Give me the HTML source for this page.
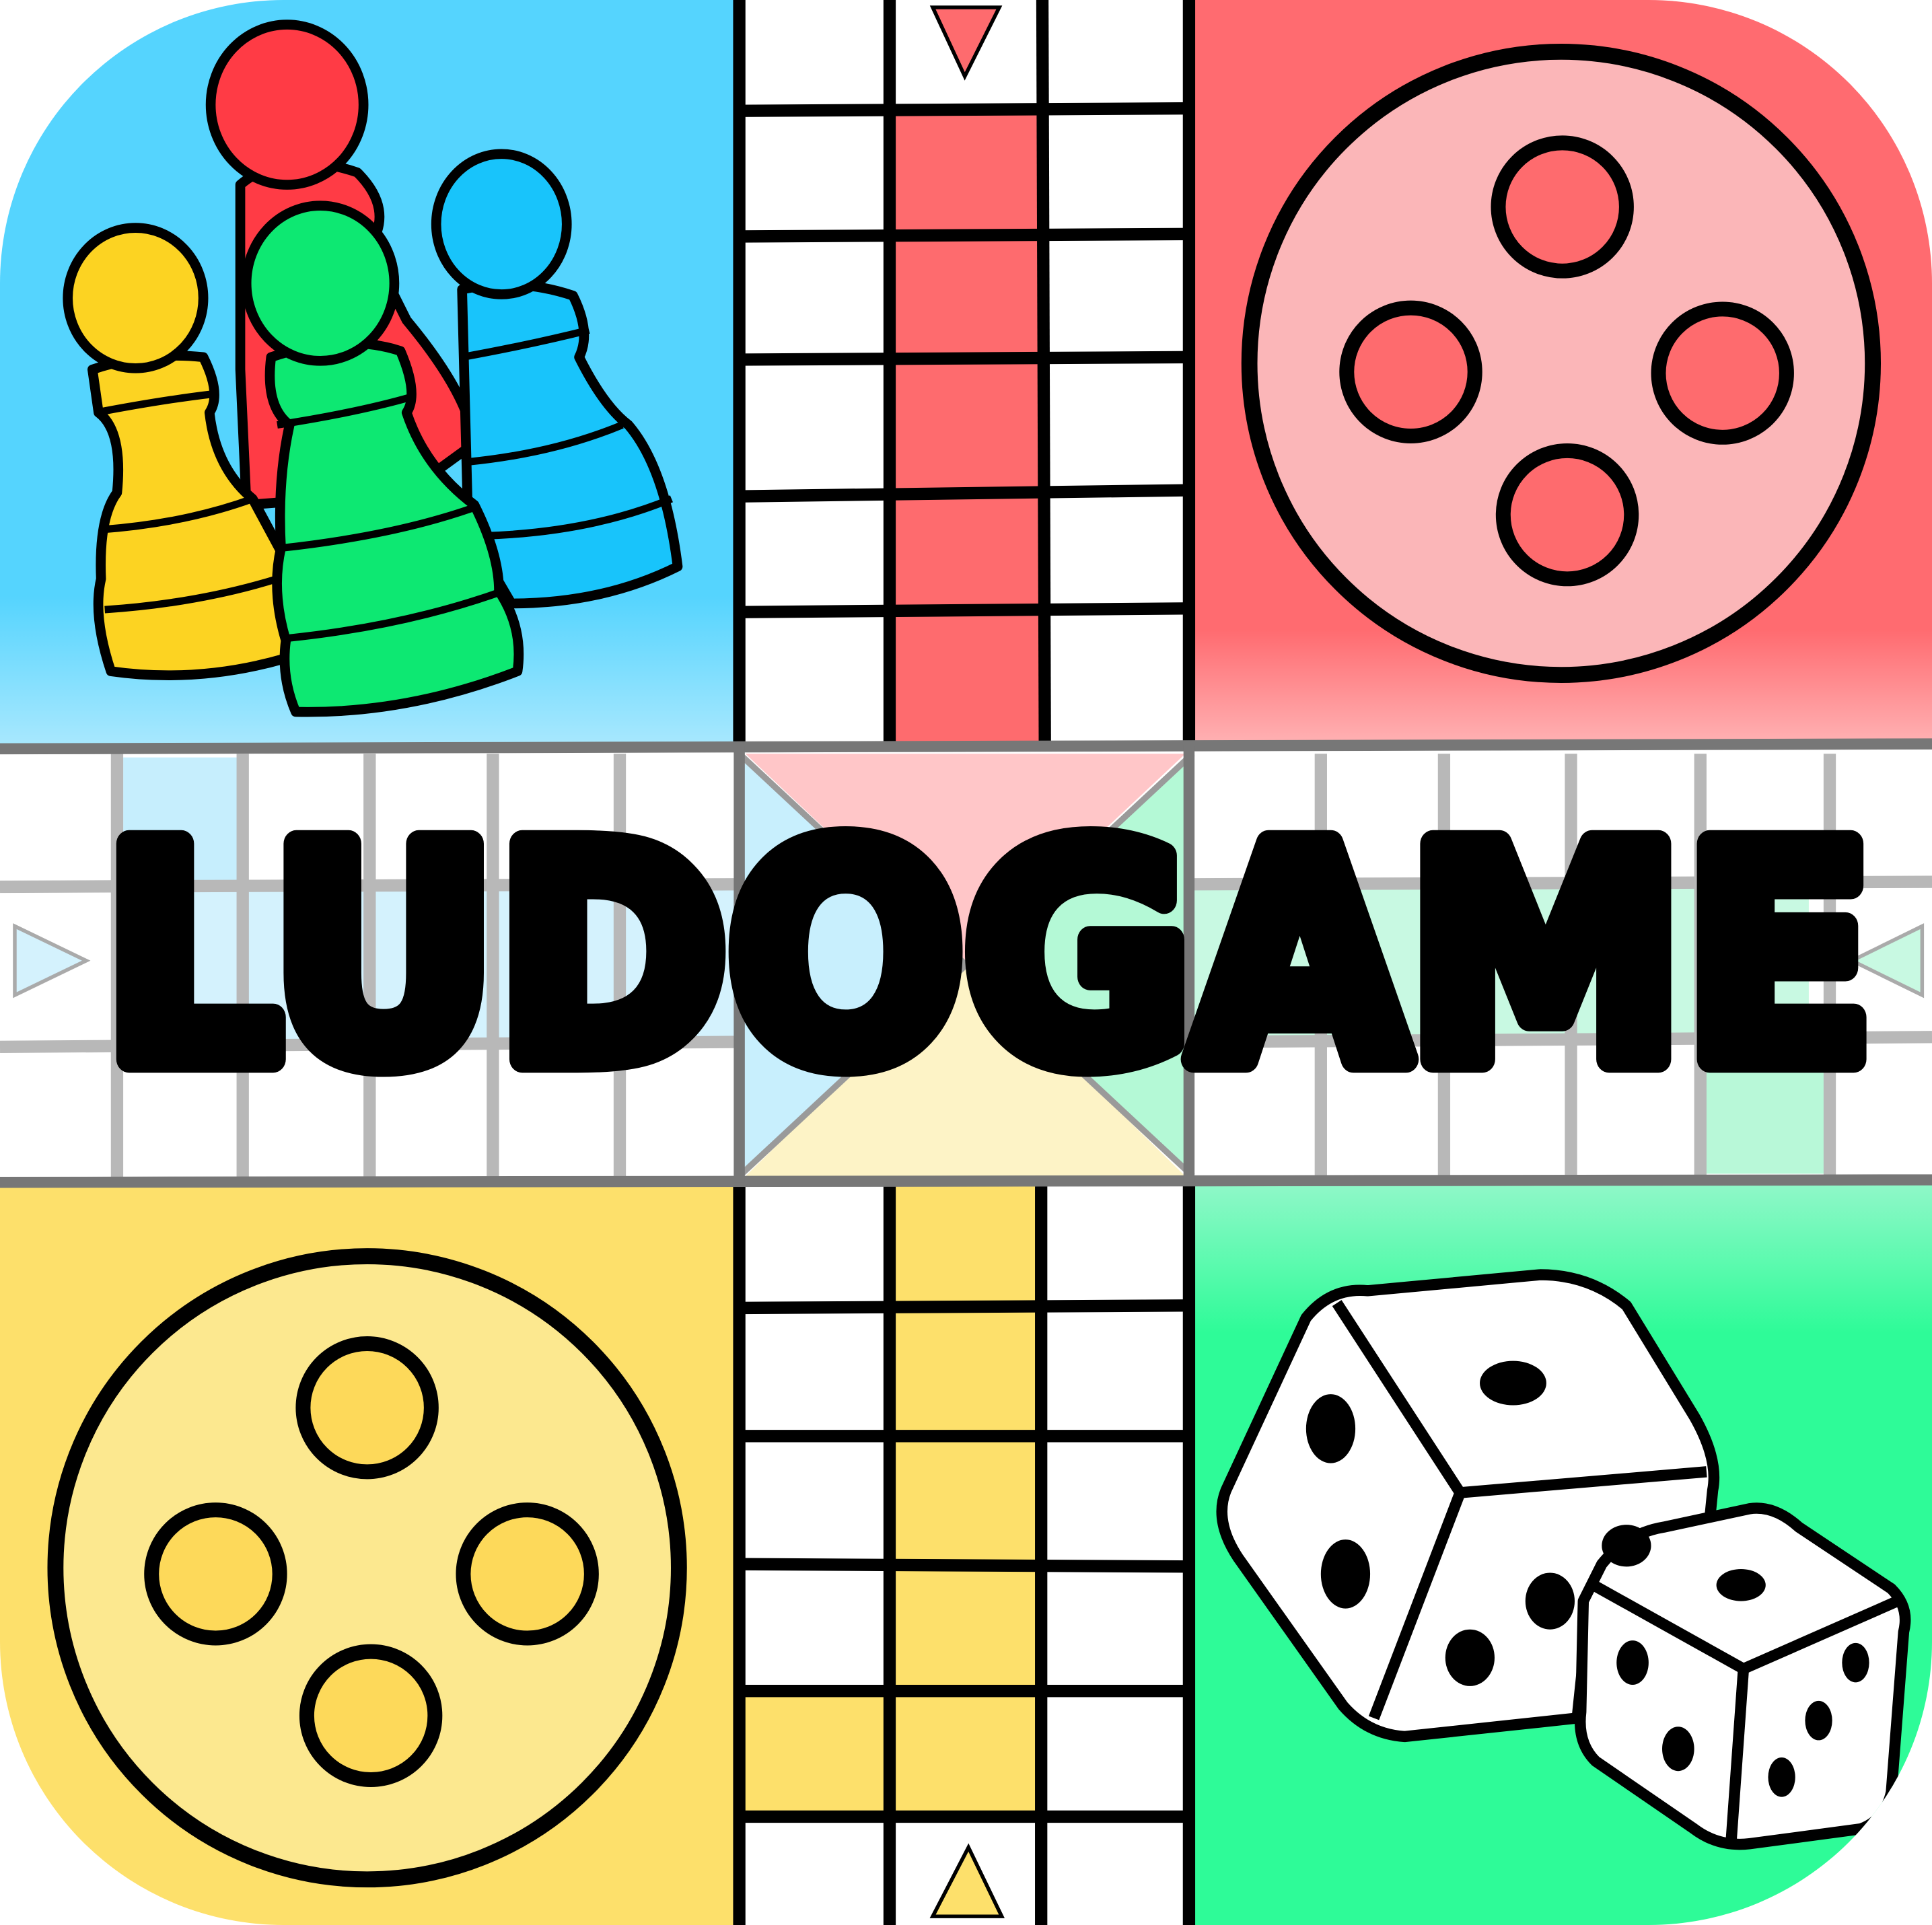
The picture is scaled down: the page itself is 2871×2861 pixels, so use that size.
<!DOCTYPE html>
<html><head><meta charset="utf-8"><style>html,body{margin:0;padding:0;background:#fff}svg{display:block}</style></head>
<body>
<svg width="2871" height="2861" viewBox="0 0 1568 1563" preserveAspectRatio="none" xmlns="http://www.w3.org/2000/svg">
<defs>
<clipPath id="c"><rect x="0" y="0" width="1568" height="1563" rx="230" ry="230"/></clipPath>
<linearGradient id="gb" x1="0" y1="0" x2="0" y2="1"><stop offset="0.8" stop-color="#55d4fe"/><stop offset="1" stop-color="#a8e8fe"/></linearGradient>
<linearGradient id="gr" x1="0" y1="0" x2="0" y2="1"><stop offset="0.85" stop-color="#ff6b70"/><stop offset="1" stop-color="#ffb0b2"/></linearGradient>
<linearGradient id="gg" x1="0" y1="0" x2="0" y2="1"><stop offset="0" stop-color="#8ff8c8"/><stop offset="0.2" stop-color="#2efb98"/><stop offset="1" stop-color="#2efb98"/></linearGradient>
</defs>
<g clip-path="url(#c)">
<rect width="1568" height="1563" fill="#fff"/>
<rect x="0" y="0" width="598" height="605" fill="url(#gb)"/>
<rect x="968" y="0" width="600" height="602" fill="url(#gr)"/>
<rect x="0" y="962" width="595" height="601" fill="#fde06b"/>
<rect x="968" y="962" width="600" height="601" fill="url(#gg)"/>
<rect x="600" y="0" width="368" height="602" fill="#fff"/>
<rect x="725" y="90" width="125" height="512" fill="#fe6b6e"/>
<polygon points="757,6 811,6 783,62" fill="#fe6b6e" stroke="#000" stroke-width="3"/>
<g stroke="#000" stroke-width="10">
<line x1="600" y1="0" x2="600" y2="602"/><line x1="722" y1="0" x2="722" y2="602"/><line x1="846" y1="0" x2="848" y2="602"/><line x1="965" y1="0" x2="965" y2="602"/>
<line x1="600" y1="90" x2="968" y2="88"/><line x1="600" y1="192" x2="968" y2="190"/><line x1="600" y1="292" x2="968" y2="290"/><line x1="600" y1="403" x2="968" y2="398"/><line x1="600" y1="497" x2="968" y2="494"/>
</g>
<rect x="600" y="962" width="368" height="601" fill="#fff"/>
<rect x="725" y="962" width="115" height="515" fill="#fde06b"/>
<rect x="600" y="1375" width="125" height="100" fill="#fde06b"/>
<polygon points="757,1556 813,1556 786,1500" fill="#fde06b" stroke="#000" stroke-width="3"/>
<g stroke="#000" stroke-width="10">
<line x1="600" y1="962" x2="600" y2="1563"/><line x1="722" y1="962" x2="722" y2="1563"/><line x1="845" y1="962" x2="845" y2="1563"/><line x1="965" y1="962" x2="965" y2="1563"/>
<line x1="600" y1="1062" x2="968" y2="1060"/><line x1="600" y1="1166" x2="968" y2="1166"/><line x1="600" y1="1270" x2="968" y2="1272"/><line x1="600" y1="1373" x2="968" y2="1373"/><line x1="600" y1="1475" x2="968" y2="1475"/>
</g>
<rect x="0" y="605" width="1568" height="357" fill="#fff"/>
<rect x="100" y="615" width="95" height="105" fill="#c6eefd"/>
<rect x="100" y="720" width="500" height="128" fill="#d4f2fd"/>
<rect x="1380" y="848" width="105" height="105" fill="#b8f8d8"/>
<rect x="968" y="720" width="500" height="128" fill="#c8f9e2"/>
<polygon points="600,612 783,780 600,955" fill="#c8effd"/>
<polygon points="968,612 783,780 968,955" fill="#b4f9d6"/>
<polygon points="605,612 962,612 783,780" fill="#ffc6c8"/>
<polygon points="605,955 962,955 783,780" fill="#fdf3c6"/>
<g stroke="#9a9a9a" stroke-width="5">
<line x1="600" y1="612" x2="968" y2="955"/><line x1="968" y1="612" x2="600" y2="955"/>
</g>
<polygon points="12,752 70,780 12,808" fill="#d4f2fd" stroke="#aaa" stroke-width="3"/>
<polygon points="1560,752 1503,780 1560,808" fill="#c8f9e2" stroke="#aaa" stroke-width="3"/>
<g stroke="#b8b8b8" stroke-width="10">
<line x1="95" y1="612" x2="95" y2="958"/><line x1="197" y1="612" x2="197" y2="958"/><line x1="300" y1="612" x2="300" y2="958"/><line x1="400" y1="612" x2="400" y2="958"/><line x1="503" y1="612" x2="503" y2="958"/>
<line x1="1072" y1="612" x2="1072" y2="958"/><line x1="1172" y1="612" x2="1172" y2="958"/><line x1="1275" y1="612" x2="1275" y2="958"/><line x1="1380" y1="612" x2="1380" y2="958"/><line x1="1485" y1="612" x2="1485" y2="958"/>
<line x1="0" y1="720" x2="600" y2="718"/><line x1="0" y1="850" x2="600" y2="846"/>
<line x1="968" y1="718" x2="1568" y2="716"/><line x1="968" y1="846" x2="1568" y2="842"/>
</g>
<g stroke="#777" stroke-width="9">
<line x1="0" y1="608" x2="1568" y2="604"/><line x1="0" y1="960" x2="1568" y2="958"/>
<line x1="600" y1="605" x2="600" y2="960"/><line x1="965" y1="605" x2="965" y2="960"/>
</g>
<circle cx="1267" cy="295" r="253" fill="#fbb6b8" stroke="#000" stroke-width="13"/>
<g fill="#fe6b6e" stroke="#000" stroke-width="12">
<circle cx="1268" cy="168" r="52"/><circle cx="1145" cy="302" r="52"/><circle cx="1398" cy="303" r="52"/><circle cx="1272" cy="418" r="52"/>
</g>
<circle cx="298" cy="1273" r="253" fill="#fce88f" stroke="#000" stroke-width="13"/>
<g fill="#fdd95a" stroke="#000" stroke-width="12">
<circle cx="298" cy="1143" r="52"/><circle cx="175" cy="1278" r="52"/><circle cx="428" cy="1278" r="52"/><circle cx="301" cy="1393" r="52"/>
</g>
<g stroke="#000" stroke-width="8" stroke-linejoin="round">
<g fill="#ff3b45">
<path d="M195,150 Q230,120 290,140 Q320,170 300,200 L330,260 Q380,320 385,360 L330,400 L200,410 L195,300 Z"/>
<ellipse cx="233" cy="85" rx="62" ry="65"/>
</g>
<g fill="#18c4fb">
<path d="M375,235 Q420,225 465,240 Q480,270 470,290 Q490,330 510,345 Q540,380 550,460 Q490,490 415,490 L380,430 Z"/>
<ellipse cx="407" cy="182" rx="53" ry="57"/>
</g>
<g fill="#fcd322">
<path d="M75,300 Q120,285 165,290 Q180,320 170,335 Q175,380 205,405 L240,470 Q245,520 230,535 Q160,555 90,545 Q75,500 82,470 Q80,420 95,400 Q100,350 80,335 Z"/>
<ellipse cx="110" cy="242" rx="55" ry="57"/>
</g>
<g fill="#0de872">
<path d="M220,290 Q280,270 325,285 Q340,320 330,335 Q345,380 385,410 Q405,450 405,480 Q425,510 420,545 Q330,580 240,578 Q228,550 232,520 Q220,480 228,445 Q225,390 235,345 Q215,330 220,290 Z"/>
<ellipse cx="260" cy="230" rx="60" ry="63"/>
</g>
<g fill="none" stroke-width="6">
<path d="M78,335 Q130,325 172,320"/><path d="M82,430 Q150,425 205,405"/><path d="M85,495 Q160,490 225,470"/>
<path d="M225,345 Q290,335 335,322"/><path d="M228,445 Q320,435 385,412"/><path d="M235,518 Q330,508 408,480"/>
<path d="M375,290 Q430,280 478,268"/><path d="M380,375 Q450,368 505,345"/><path d="M395,435 Q480,432 545,405"/>
</g>
</g>
<g stroke="#000" stroke-width="9" stroke-linejoin="round" fill="#fff">
<path d="M1060,1070 Q1080,1045 1110,1048 L1250,1035 Q1290,1035 1320,1060 L1375,1150 Q1395,1185 1390,1210 L1385,1260 Q1330,1270 1290,1300 L1280,1395 L1140,1410 Q1110,1408 1090,1385 L1005,1265 Q985,1235 995,1210 Z"/>
<path d="M1085,1058 L1185,1212 L1385,1195"/><path d="M1185,1212 L1115,1395"/>
<path d="M1300,1270 Q1320,1245 1350,1240 L1420,1225 Q1440,1222 1460,1240 L1535,1290 Q1550,1305 1545,1325 L1535,1455 Q1530,1478 1510,1485 L1420,1497 Q1395,1500 1375,1485 L1295,1430 Q1280,1415 1283,1390 L1285,1300 Z"/>
<path d="M1295,1288 L1415,1355 L1540,1300"/><path d="M1415,1355 L1405,1495"/>
</g>
<g fill="#000">
<ellipse cx="1228" cy="1123" rx="27" ry="18"/>
<ellipse cx="1080" cy="1160" rx="20" ry="28"/><ellipse cx="1092" cy="1278" rx="20" ry="28"/>
<ellipse cx="1258" cy="1300" rx="20" ry="23"/><ellipse cx="1193" cy="1346" rx="20" ry="23"/><ellipse cx="1320" cy="1255" rx="20" ry="17"/>
<ellipse cx="1413" cy="1287" rx="20" ry="13"/>
<ellipse cx="1325" cy="1350" rx="13" ry="18"/><ellipse cx="1362" cy="1420" rx="13" ry="18"/>
<ellipse cx="1506" cy="1350" rx="11" ry="16"/><ellipse cx="1476" cy="1397" rx="11" ry="16"/><ellipse cx="1446" cy="1443" rx="11" ry="16"/>
</g>
<text x="84" y="860" font-family="'DejaVu Sans','Liberation Sans',sans-serif" font-weight="bold" font-size="240" textLength="1437" lengthAdjust="spacingAndGlyphs" fill="#000" stroke="#000" stroke-width="22" stroke-linejoin="round">LUDOGAME</text>
</g>
</svg>
</body></html>
